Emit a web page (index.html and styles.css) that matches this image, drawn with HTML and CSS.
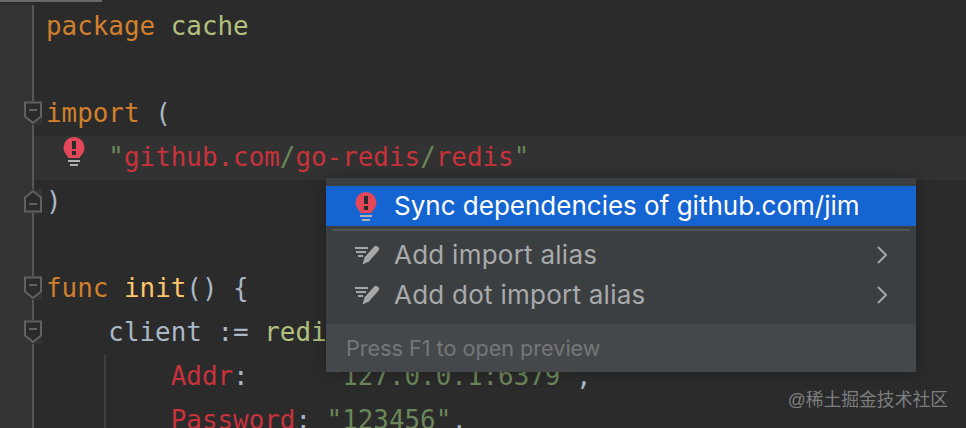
FILE: index.html
```html
<!DOCTYPE html>
<html lang="en">
<head>
<meta charset="utf-8">
<title>Editor</title>
<link rel="stylesheet" href="styles.css">
</head>
<body>
<svg class="defs" width="0" height="0">
  <defs>
    <symbol id="bulb" viewBox="0 0 22 30">
      <path d="M11 1a10.500 10.500 0 0 0-10.500 10.500c0 4 2.300 6.500 3.800 8.500.7 1 1 1.500 1.200 2h11c.2-.5.500-1 1.200-2 1.500-2 3.800-4.500 3.800-8.500A10.500 10.500 0 0 0 11 1z" fill="#e5475a"/>
      <rect x="9" y="5" width="4" height="8" fill="#2b2b2b" class="mark"/>
      <rect x="9" y="15" width="4" height="4" fill="#2b2b2b" class="mark"/>
      <rect x="5" y="24" width="12" height="2" fill="#afb1b3"/>
      <rect x="7" y="28" width="8" height="2" fill="#afb1b3"/>
    </symbol>
    <symbol id="edit" viewBox="0 0 26 20">
      <rect x="0" y="2" width="13" height="2" fill="#a4a6a8"/>
      <rect x="1" y="6" width="10" height="2" fill="#a4a6a8"/>
      <rect x="3" y="10" width="5" height="2" fill="#a4a6a8"/>
      <path d="M21 4L13 13" fill="none" stroke="#a4a6a8" stroke-width="6" stroke-linecap="round"/>
      <path d="M10 11l5 5-7.500 3.500z" fill="#a4a6a8"/>
    </symbol>
  </defs>
</svg>

<main class="editor">
  <div class="row"><div class="gut"></div><code class="code"><span class="kw">package</span> <span class="pkg">cache</span></code></div>
  <div class="row"><div class="gut"></div><code class="code"></code></div>
  <div class="row">
    <div class="gut"><svg class="fold" viewBox="0 0 18 24"><path d="M1 1.500h16v14l-8 6.500-8-6.500z"/><path d="M5 9h8"/></svg></div>
    <code class="code"><span class="kw">import</span> <span class="par">(</span></code>
  </div>
  <div class="row current">
    <div class="gut"></div>
    <code class="code"><svg class="bulb-editor" width="22" height="30"><use href="#bulb"/></svg>    <span class="str">"</span><span class="err">github.com</span><span class="str">/</span><span class="err">go-redis</span><span class="str">/</span><span class="err">redis</span><span class="str">"</span></code>
  </div>
  <div class="row">
    <div class="gut"><svg class="fold" viewBox="0 0 18 24"><path d="M1 22.500h16v-14l-8-6.500-8 6.500z"/><path d="M5 15h8"/></svg></div>
    <code class="code"><span class="par">)</span></code>
  </div>
  <div class="row"><div class="gut"></div><code class="code"></code></div>
  <div class="row">
    <div class="gut"><svg class="fold" viewBox="0 0 18 24"><path d="M1 1.500h16v14l-8 6.500-8-6.500z"/><path d="M5 9h8"/></svg></div>
    <code class="code"><span class="kw">func</span> <span class="fn">init</span><span class="par">() {</span></code>
  </div>
  <div class="row">
    <div class="gut"><svg class="fold" viewBox="0 0 18 24"><path d="M1 1.500h16v14l-8 6.500-8-6.500z"/><path d="M5 9h8"/></svg></div>
    <code class="code"><span class="par">    client := </span><span class="pkg">redis</span><span class="par">.NewClient(&amp;redis.Options{</span></code>
  </div>
  <div class="row guided"><div class="gut"></div><code class="code">        <span class="err">Addr</span><span class="par">:</span>     <span class="str">"127.0.0.1:6379"</span><span class="par">,</span></code></div>
  <div class="row guided"><div class="gut"></div><code class="code">        <span class="err">Password</span><span class="par">:</span> <span class="str">"123456"</span><span class="par">,</span></code></div>
</main>

<section class="popup">
  <div class="item selected">
    <svg class="item-bulb" width="22" height="30"><use href="#bulb"/></svg>
    <span class="label">Sync dependencies of github.com/jim</span>
  </div>
  <div class="sep"></div>
  <div class="item plain">
    <svg class="item-edit" width="26" height="20"><use href="#edit"/></svg>
    <span class="label">Add import alias</span>
    <svg class="chev" width="12" height="18" viewBox="0 0 12 18"><path d="M2 1l8 8-8 8"/></svg>
  </div>
  <div class="item plain">
    <svg class="item-edit" width="26" height="20"><use href="#edit"/></svg>
    <span class="label">Add dot import alias</span>
    <svg class="chev" width="12" height="18" viewBox="0 0 12 18"><path d="M2 1l8 8-8 8"/></svg>
  </div>
  <footer class="hint">Press F1 to open preview</footer>
</section>

<div class="mark-text">@稀土掘金技术社区</div>
</body>
</html>
```
FILE: styles.css
```css
html, body {
  margin: 0;
  height: 428px;
  overflow: hidden;
  background: #2b2b2b;
}

.defs {
  position: absolute;
}

.editor {
  padding-top: 4.500px;
  height: 423.500px;
  background: linear-gradient(#66686a, #66686a) 0 0 / 102px 2px no-repeat, #2b2b2b;
}

.row {
  display: flex;
  height: 43.800px;
}

.gut {
  position: relative;
  flex: 0 0 34px;
  box-sizing: border-box;
  background: #313335;
  border-right: 2px solid #555759;
}

.row.current .code {
  background: #323232;
}

.code {
  position: relative;
  flex: 1;
  padding-left: 12px;
  font-family: "DejaVu Sans Mono", "Liberation Mono", monospace;
  font-size: 25.900px;
  line-height: 43.800px;
  white-space: pre;
  color: #a9b7c6;
  -webkit-font-smoothing: antialiased;
}

.row.guided .code::before {
  content: "";
  position: absolute;
  left: 70px;
  top: 0;
  bottom: 0;
  width: 2px;
  background: #3d3f40;
}

.kw { color: #d17f2c; }
.pkg { color: #b1c07f; }
.par { color: #a9b7c6; }
.fn { color: #ffc66d; }
.err { color: #c8323c; }
.str { color: #6a8759; }

.fold {
  position: absolute;
  left: 24px;
  top: 9px;
  width: 18px;
  height: 24px;
  background: #313335;
  fill: #2b2b2b;
  stroke: #5f6163;
  stroke-width: 2;
  overflow: visible;
}

.bulb-editor {
  position: absolute;
  left: 29px;
  top: 0;
}

.popup {
  position: absolute;
  left: 326px;
  top: 178px;
  width: 590px;
  height: 194px;
  display: flex;
  flex-direction: column;
  padding-top: 8px;
  box-sizing: border-box;
  background: #3c3f41;
  box-shadow: 0 0 14px rgba(0, 0, 0, .28);
  font-family: Inter, "Liberation Sans", sans-serif;
}

.item {
  display: flex;
  align-items: center;
  height: 40px;
  padding: 0 28px 0 29px;
  color: #a8aaab;
  font-size: 26px;
}

.item.plain {
  letter-spacing: .25px;
}

.item.selected {
  background: #1464d2;
  color: #fff;
}

.item-bulb {
  flex: none;
  width: 22px;
  margin-right: 17px;
}

.item.selected .mark {
  fill: #1464d2;
}

.item-edit {
  flex: none;
  margin-right: 13px;
}

.label {
  flex: 1;
  margin-top: -2px;
  white-space: nowrap;
}

.chev {
  flex: none;
  fill: none;
  stroke: #a4a6a8;
  stroke-width: 2;
}

.sep {
  height: 2px;
  margin: 3px 6px 4px;
  background: #515355;
}

.hint {
  margin-top: auto;
  height: 48px;
  padding-left: 20px;
  line-height: 48px;
  background: #45484a;
  color: #747779;
  font-size: 21.600px;
}

.mark-text {
  position: absolute;
  right: 18px;
  top: 389px;
  font-family: "Liberation Sans", "Noto Sans CJK SC", sans-serif;
  font-size: 17.800px;
  line-height: 22px;
  color: #7c7e80;
  white-space: nowrap;
}
```
